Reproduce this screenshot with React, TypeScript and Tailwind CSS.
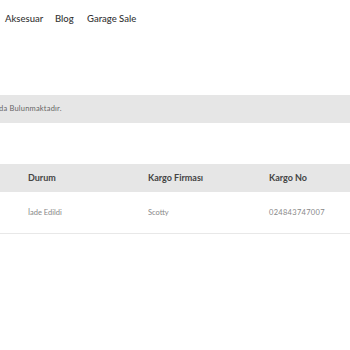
export default function App() {
  const font = { fontFamily: 'Lato, "Noto Sans", sans-serif' };
  return (
    <div className="h-[350px] w-[350px] overflow-hidden bg-white" style={font}>
      <nav className="flex h-[38px] items-center pl-[5px] text-[9.5px] font-medium text-[#333]">
        <span className="w-[50px]">Aksesuar</span>
        <span className="w-[32px]">Blog</span>
        <span>Garage Sale</span>
      </nav>
      <div className="mt-[57px] flex h-[28px] items-center bg-[#e6e6e6] text-[7.5px] text-[#666]">
        <span className="-ml-[1px] whitespace-nowrap tracking-[0.2px]">da Bulunmaktadır.</span>
      </div>
      <div className="mt-[41px]">
        <div className="grid h-[28px] grid-cols-[28px_120px_121px_1fr] items-center bg-[#e6e6e6] text-[9px] font-bold text-[#444]">
          <span />
          <span>Durum</span>
          <span>Kargo Firması</span>
          <span>Kargo No</span>
        </div>
        <div className="grid h-[42px] grid-cols-[28px_120px_121px_1fr] items-center border-b border-[#e8e8e8] text-[7.5px] text-[#888]">
          <span />
          <span>İade Edildi</span>
          <span>Scotty</span>
          <span className="tracking-[0.3px]">024843747007</span>
        </div>
      </div>
    </div>
  );
}
